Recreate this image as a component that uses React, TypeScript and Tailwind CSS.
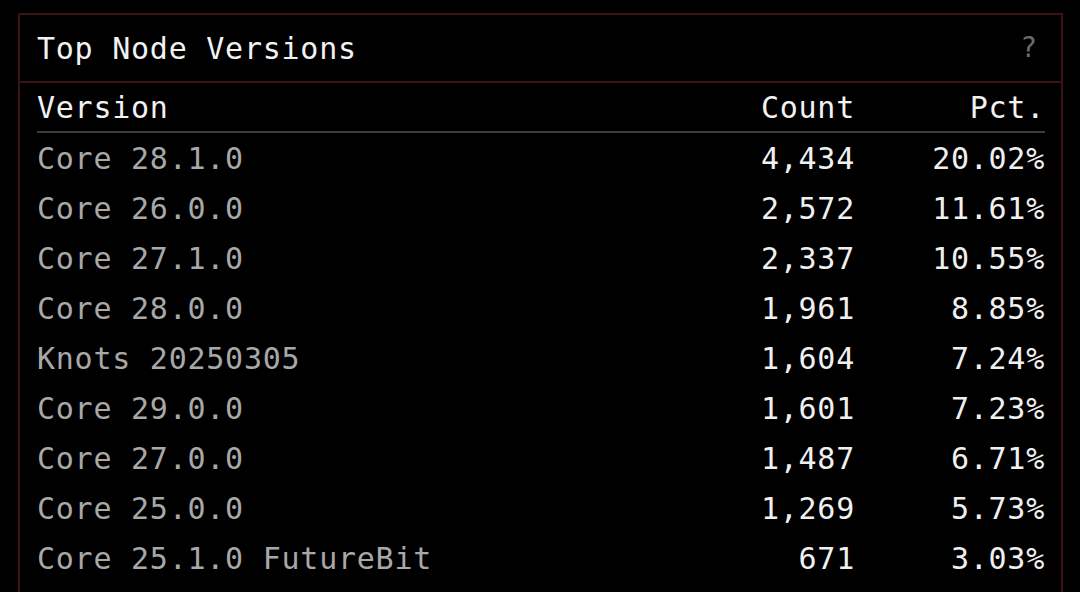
import React from 'react';

const rows = [
  { version: 'Core 28.1.0', count: '4,434', pct: '20.02%' },
  { version: 'Core 26.0.0', count: '2,572', pct: '11.61%' },
  { version: 'Core 27.1.0', count: '2,337', pct: '10.55%' },
  { version: 'Core 28.0.0', count: '1,961', pct: '8.85%' },
  { version: 'Knots 20250305', count: '1,604', pct: '7.24%' },
  { version: 'Core 29.0.0', count: '1,601', pct: '7.23%' },
  { version: 'Core 27.0.0', count: '1,487', pct: '6.71%' },
  { version: 'Core 25.0.0', count: '1,269', pct: '5.73%' },
  { version: 'Core 25.1.0 FutureBit', count: '671', pct: '3.03%' },
];

const App = () => {
  return (
    <div
      className="w-[1080px] h-[592px] bg-black overflow-hidden pt-[13px] pl-[18px]"
      style={{ fontFamily: '"DejaVu Sans Mono", "Liberation Mono", monospace' }}
    >
      <div className="w-[1045px] h-[600px] border-2 border-[#3a1414]">
        {/* Header */}
        <div className="h-[68px] flex items-center justify-between pl-[17px] pr-[24px] border-b-2 border-[#3a1414]">
          <span className="text-[30px] text-[#f2f2f2] tracking-[0.75px]">Top Node Versions</span>
          <span className="text-[28px] text-[#6b6b6b]">?</span>
        </div>

        {/* Table */}
        <div className="pl-[17px] pr-[16px] tracking-[0.75px]">
          <div className="flex items-center h-[50px] border-b-2 border-[#3c3c3c] text-[30px] text-[#f2f2f2]">
            <div className="flex-1">Version</div>
            <div className="w-[200px] text-right">Count</div>
            <div className="w-[190px] text-right">Pct.</div>
          </div>
          {rows.map((r) => (
            <div key={r.version} className="flex items-center h-[50px] text-[30px]">
              <div className="flex-1 text-[#a8a8a8]">{r.version}</div>
              <div className="w-[200px] text-right text-[#f0f0f0]">{r.count}</div>
              <div className="w-[190px] text-right text-[#f0f0f0]">{r.pct}</div>
            </div>
          ))}
        </div>
      </div>
    </div>
  );
};

export default App;
